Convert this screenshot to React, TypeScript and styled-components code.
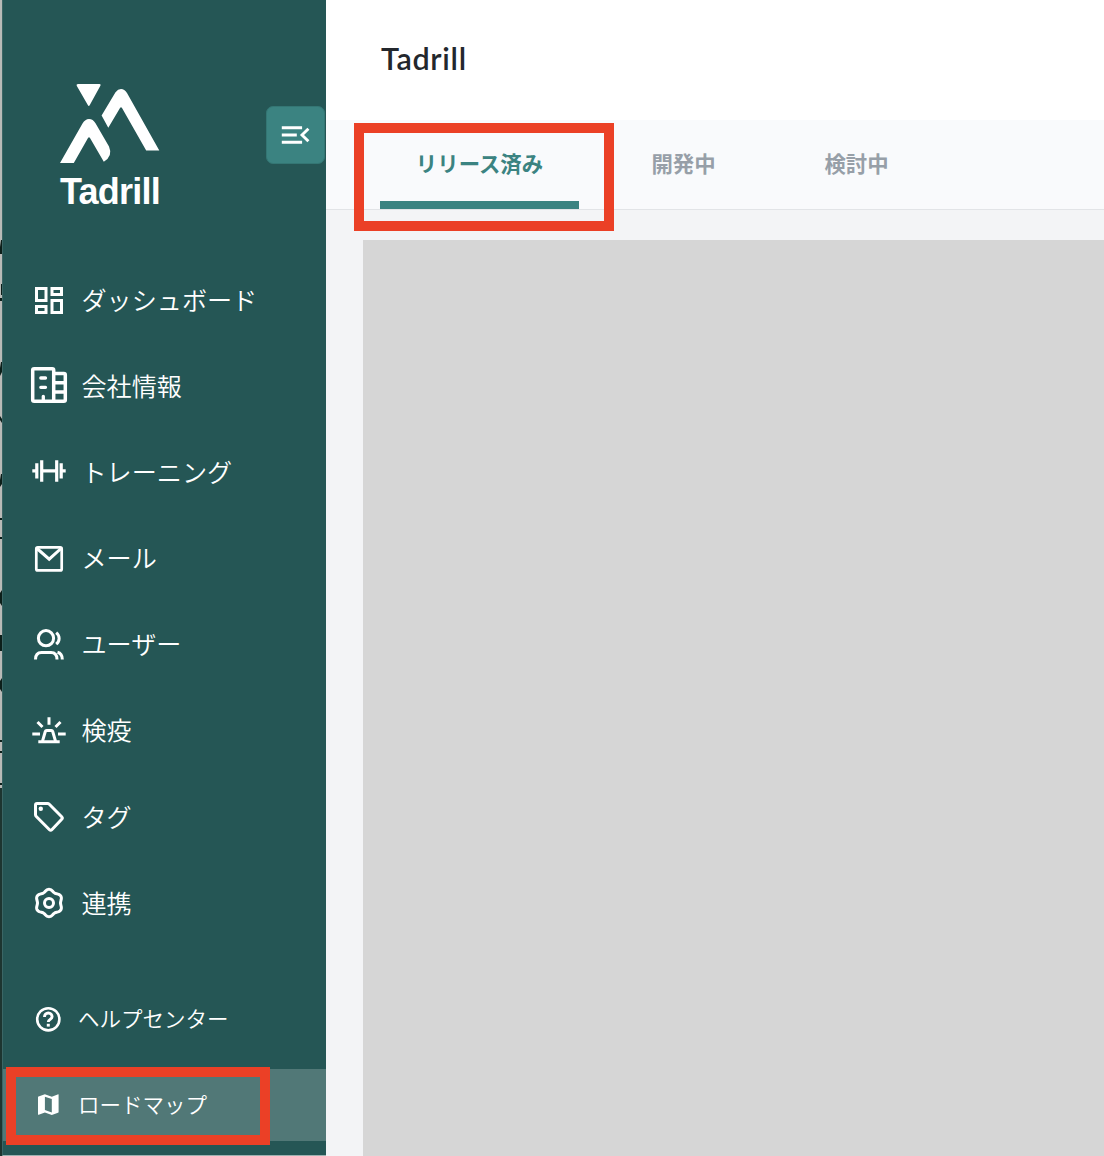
import React from 'react';
import styled, { createGlobalStyle } from 'styled-components';

const jp = `"Noto Sans CJK JP", "Noto Sans", sans-serif`;

const GlobalStyle = createGlobalStyle`
  *, *::before, *::after { box-sizing: border-box; }
  html, body { margin: 0; padding: 0; overflow: hidden; background: #f3f4f6; }
  body { font-family: ${jp}; }
  button { font: inherit; border: 0; padding: 0; background: none; cursor: pointer; }
`;

const Page = styled.div`
  display: flex;
  width: 1104px;
  height: 1156px;
  overflow: hidden;
`;

const EdgeStrip = styled.svg`
  flex: none;
  width: 2px;
  height: 1156px;
  background: linear-gradient(#b9bab7 0 788px, #1d3530 788px);
`;

const Sidebar = styled.aside`
  display: flex;
  flex-direction: column;
  flex: none;
  width: 324px;
  background: #255655;
  border-left: 1px solid #3b6665;
  border-bottom: 1px solid #9db2b1;
`;

const Brand = styled.div`
  display: flex;
  justify-content: space-between;
  height: 256px;
  padding: 80px 1px 0 55px;
`;

const Logo = styled.div`
  width: 110px;
`;

const LogoMark = styled.svg`
  display: block;
  width: 110px;
  height: 90px;
  fill: #fff;
`;

const LogoText = styled.div`
  margin-top: 2px;
  padding-left: 2px;
  font: bold 36px/40px "Liberation Sans", Arial, sans-serif;
  letter-spacing: -0.75px;
  white-space: nowrap;
  color: #fff;
`;

const CollapseButton = styled.button`
  display: flex;
  align-items: center;
  justify-content: center;
  width: 59px;
  height: 58px;
  margin-top: 26px;
  border-radius: 7px;
  background: #3b8381;
  border: 1px solid #347674;
`;

const Nav = styled.nav`
  display: flex;
  flex-direction: column;
  gap: 14.2px;
  margin-top: 8px;
`;

const FootNav = styled(Nav)`
  gap: 14px;
  margin-top: 43.6px;
`;

const NavItem = styled.a<{ $active?: boolean; $small?: boolean }>`
  display: flex;
  align-items: center;
  height: 72px;
  padding-left: 26px;
  gap: ${(p) => (p.$small ? 9 : 12.5)}px;
  font-size: ${(p) => (p.$small ? 21.5 : 25.1)}px;
  line-height: 36px;
  font-weight: 350;
  color: #fff;
  white-space: nowrap;
  background: ${(p) => (p.$active ? '#517877' : 'transparent')};
`;

const Label = styled.span<{ $small?: boolean }>`
  padding-bottom: ${(p) => (p.$small ? 2 : 3)}px;
`;

const Glyph = styled.svg`
  flex: none;
  display: block;
  width: 40px;
  height: 40px;
  fill: none;
  stroke: #fff;
  stroke-width: 3;
`;

const Main = styled.main`
  display: flex;
  flex-direction: column;
  flex: 1;
  min-width: 0;
`;

const TitleBar = styled.header`
  display: flex;
  align-items: center;
  height: 120px;
  padding: 0 0 4px 55px;
  background: #fff;
`;

const Title = styled.h1`
  margin: 0;
  font: 600 30.5px/40px Lato, sans-serif;
  letter-spacing: 0.7px;
  color: #23272d;
`;

const Tabs = styled.div`
  display: flex;
  height: 90px;
  padding-left: 54px;
  background: #f9fafc;
  border-bottom: 1px solid #e2e4e7;
`;

const Tab = styled.button<{ $active?: boolean; $width: number }>`
  width: ${(p) => p.$width}px;
  height: 89px;
  padding-top: 4px;
  padding-bottom: ${(p) => (p.$active ? 0 : 8)}px;
  border-bottom: ${(p) => (p.$active ? '8px solid #3b8381' : '0')};
  font-size: 21.4px;
  font-weight: 700;
  color: ${(p) => (p.$active ? '#3b8381' : '#979fa8')};
`;

const Content = styled.section`
  display: flex;
  flex: 1;
  padding: 30px 0 0 37px;
  background: #f3f4f6;
`;

const Placeholder = styled.div`
  flex: 1;
  background: #d6d6d6;
`;

const Marker = styled.div<{ $x: number; $y: number; $w: number; $h: number }>`
  position: absolute;
  left: ${(p) => p.$x}px;
  top: ${(p) => p.$y}px;
  width: ${(p) => p.$w}px;
  height: ${(p) => p.$h}px;
  border: 10px solid #eb4026;
  pointer-events: none;
`;

const gearPath =
  Array.from({ length: 120 }, (_, i) => {
    const t = (i / 120) * Math.PI * 2;
    const r = 12.6 - 1.1 * Math.cos(6 * t);
    return `${i ? 'L' : 'M'}${(20 + r * Math.cos(t)).toFixed(2)} ${(20 + r * Math.sin(t)).toFixed(2)}`;
  }).join('') + 'Z';

const icons: Record<string, React.ReactNode> = {
  dashboard: (
    <>
      <rect x="7.5" y="8.5" width="9.5" height="12" />
      <rect x="23" y="8.5" width="9.5" height="6" />
      <rect x="7.5" y="26.5" width="9.5" height="6" />
      <rect x="23" y="20.5" width="9.5" height="12" />
    </>
  ),
  company: (
    <>
      <path d="M24.7 35.3H5.2a1.5 1.5 0 0 1-1.5-1.5V4.2a1.5 1.5 0 0 1 1.5-1.5h18a1.5 1.5 0 0 1 1.5 1.5zM24.7 7.5h10.1a1.5 1.5 0 0 1 1.5 1.5v24.8a1.5 1.5 0 0 1-1.5 1.5H24.7M24.7 16.7h11.6M24.7 26h11.6" strokeWidth="3.5" />
      <path d="M11.8 12h4.7M11.8 21.3h4.7M14.3 30.3v5" strokeLinecap="round" strokeWidth="3.3" />
    </>
  ),
  training: <path d="M12.7 8.3v21.4M27.7 8.3v21.4M7.8 11.2v15.2M32.2 11.2v15.2M12.7 18.8h15M3.3 18.8h4.5M32.2 18.8h4.5" strokeWidth="3.2" />,
  mail: (
    <>
      <rect x="7.3" y="8.4" width="25.4" height="23" rx="1.5" strokeWidth="2.7" />
      <path d="M8 9.5 20.2 20.2 32 9.5" />
    </>
  ),
  users: (
    <>
      <circle cx="17" cy="13.2" r="7.6" />
      <path d="M27.2 7.7c3.900 3.200 3.900 8.300 0 11.500M6.500 34.500c0-4.500 2-7 6-7h9.500c4 0 6 2.500 6 7M28.500 27.300c3.300.8 4.800 3.200 4.800 7.200" />
    </>
  ),
  siren: (
    <>
      <path d="M20 6.300v7.400M8.500 11l5 5M31.500 11l-5 5M3.300 23H11M29 23h7.700M9.300 30.700h21.400" />
      <path d="M13.500 30.200 16.300 20.500q.3-1 1.300-1h4.800q1 0 1.300 1L26.500 30.200" />
    </>
  ),
  tag: (
    <>
      <path d="M8 6.500h10.500q1 0 1.800.8L32.700 19.800q1.200 1.200 0 2.400L22.800 32.700q-1.100 1.200-2.300 0L7.300 19.500q-.8-.8-.8-1.800V8q0-1.500 1.500-1.500z" />
      <circle cx="11.800" cy="11.700" r="2.200" fill="#fff" stroke="none" />
    </>
  ),
  gear: (
    <>
      <path d={gearPath} strokeLinejoin="round" />
      <circle cx="20" cy="20" r="4.500" />
    </>
  ),
  help: (
    <>
      <circle cx="19.300" cy="20.300" r="11.100" strokeWidth="2.600" />
      <path d="M15.500 18v-.2a3.800 3.800 0 0 1 7.600 0c0 2.500-3.800 2.700-3.800 5.200" strokeWidth="2.900" />
      <path d="M17.800 24.800h3v2.800h-3z" fill="#fff" stroke="none" />
    </>
  ),
  map: (
    <path
      d="M29.300 9.300 22.800 11.700 15.900 9.300 9.500 11.500Q9 11.700 9 12.300V29.200Q9 30 9.700 29.800L15.900 27.400 22.800 29.900 29 27.700Q29.600 27.500 29.600 26.900V9.900Q29.600 9.200 29.300 9.300ZM22.800 27.500 15.900 25.100V11.700L22.800 14.100Z"
      fill="#fff"
      fillRule="evenodd"
      stroke="none"
    />
  ),
};

const mainItems = [
  ['dashboard', 'ダッシュボード'],
  ['company', '会社情報'],
  ['training', 'トレーニング'],
  ['mail', 'メール'],
  ['users', 'ユーザー'],
  ['siren', '検疫'],
  ['tag', 'タグ'],
  ['gear', '連携'],
];

const footItems = [
  ['help', 'ヘルプセンター'],
  ['map', 'ロードマップ'],
];

const Icon = ({ name }: { name: string }) => <Glyph viewBox="0 0 40 40">{icons[name]}</Glyph>;

export default function App() {
  return (
    <>
      <GlobalStyle />
      <Page>
        <EdgeStrip viewBox="0 0 2 1156">
          <path
            d="M1 240h1v14H0v-7zM1 284h1v11H1zM0 298h2v3H0zM1 362h1v10l-2 4v-8zM0 416l2 3v4l-2-3zM1 474h1v10l-2 3v-7zM0 518h2v2H0zM0 537h2v2H0zM0 593l2-3v16l-2-3zM0 635h2v16H0zM0 681l2-3v14l-2-3zM0 740h2v2H0zM0 751h2v2H0zM0 783h2v2H0z"
            fill="#0c1f1a"
          />
        </EdgeStrip>
        <Sidebar>
          <Brand>
            <Logo>
              <LogoMark viewBox="58 80 110 90">
                <path d="M78 84H99.500Q101.200 84 100.500 85.500L89.800 105Q88.800 106.800 87.800 105L76.700 85.800Q76 84 78 84Z" />
                <path d="M101.600 115.500 115.500 92.200Q118 89 121 89Q124.500 89 127 93L159.300 150.500H146.200L122 108Q121 106.300 120 108L108.300 127.800Z" />
                <path d="M60 163 82.500 123.500Q85.200 119 89 119Q93 119 95.500 123.300L109 146.500Q113.200 156 103.800 161.700L90 138Q89 136.500 88 138L73.800 163Z" />
              </LogoMark>
              <LogoText>Tadrill</LogoText>
            </Logo>
            <CollapseButton aria-label="menu">
              <Glyph viewBox="0 0 40 40">
                <path d="M5.800 12.700h20.300M5.800 20h15M5.800 27.300h20.300M32.400 13.700 26 20 32.400 26.300" strokeWidth="2.900" />
              </Glyph>
            </CollapseButton>
          </Brand>
          <Nav>
            {mainItems.map(([icon, label]) => (
              <NavItem key={icon}>
                <Icon name={icon} />
                <Label>{label}</Label>
              </NavItem>
            ))}
          </Nav>
          <FootNav>
            {footItems.map(([icon, label]) => (
              <NavItem key={icon} $small $active={icon === 'map'}>
                <Icon name={icon} />
                <Label $small>{label}</Label>
              </NavItem>
            ))}
          </FootNav>
        </Sidebar>
        <Main>
          <TitleBar>
            <Title>Tadrill</Title>
          </TitleBar>
          <Tabs>
            <Tab $active $width={199}>リリース済み</Tab>
            <Tab $width={209}>開発中</Tab>
            <Tab $width={137}>検討中</Tab>
          </Tabs>
          <Content>
            <Placeholder />
          </Content>
        </Main>
      </Page>
      <Marker $x={354} $y={123} $w={260} $h={108} />
      <Marker $x={6} $y={1067} $w={264} $h={78} />
    </>
  );
}
